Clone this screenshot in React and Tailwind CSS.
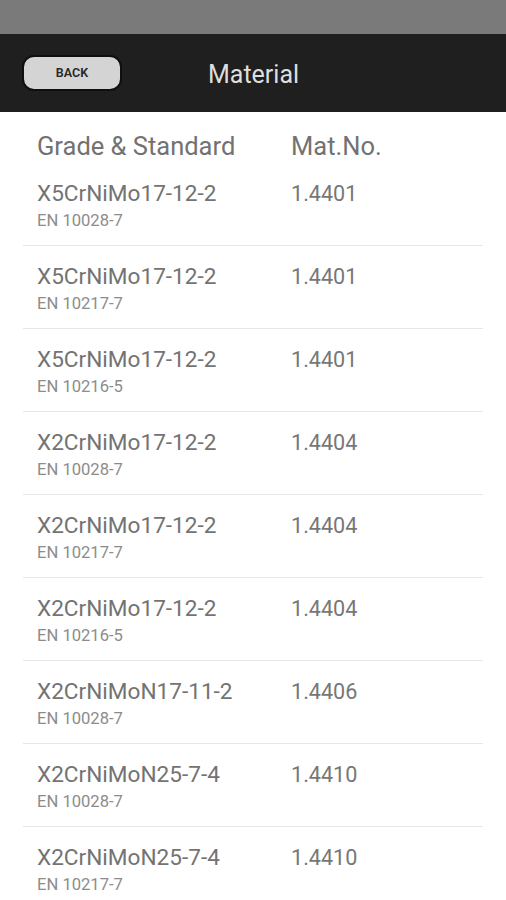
import React from "react";

const rows = [
  ["X5CrNiMo17-12-2", "EN 10028-7", "1.4401"],
  ["X5CrNiMo17-12-2", "EN 10217-7", "1.4401"],
  ["X5CrNiMo17-12-2", "EN 10216-5", "1.4401"],
  ["X2CrNiMo17-12-2", "EN 10028-7", "1.4404"],
  ["X2CrNiMo17-12-2", "EN 10217-7", "1.4404"],
  ["X2CrNiMo17-12-2", "EN 10216-5", "1.4404"],
  ["X2CrNiMoN17-11-2", "EN 10028-7", "1.4406"],
  ["X2CrNiMoN25-7-4", "EN 10028-7", "1.4410"],
  ["X2CrNiMoN25-7-4", "EN 10217-7", "1.4410"],
];

export default function App() {
  return (
    <div className="w-[506px] h-[900px] overflow-hidden bg-white" style={{ fontFamily: "Roboto, 'Noto Sans', sans-serif" }}>
      <div className="h-[34px] bg-[#7a7a7a]" />
      <div className="h-[78px] bg-[#1f1f1f] flex items-center relative">
        <button className="ml-[22px] w-[100px] h-[36px] rounded-[12px] bg-[#d4d4d4] border-2 border-[#0f0f0f] text-[12.5px] font-semibold text-[#262626] flex items-center justify-center">
          BACK
        </button>
        <div className="absolute left-[208px] top-0 pt-[3px] h-full flex items-center text-[25px] text-[#dedede]">Material</div>
      </div>
      <div className="px-[23px]">
        <div className="flex pt-[20px] mb-[3px] px-[14px] text-[25.5px] leading-[28px] text-[#727272]">
          <div className="w-[254px]">Grade &amp; Standard</div>
          <div>Mat.No.</div>
        </div>
        {rows.map((r, i) => (
          <div key={i} className="flex px-[14px] pt-[17px] pb-[15px] border-b border-[#e6e6e6]">
            <div className="w-[254px]">
              <div className="text-[22.6px] leading-[28px] text-[#737373]">{r[0]}</div>
              <div className="mt-[4px] text-[16.6px] leading-[18px] text-[#8c8c8c]">{r[1]}</div>
            </div>
            <div className="text-[21.6px] leading-[28px] text-[#777]">{r[2]}</div>
          </div>
        ))}
      </div>
    </div>
  );
}
